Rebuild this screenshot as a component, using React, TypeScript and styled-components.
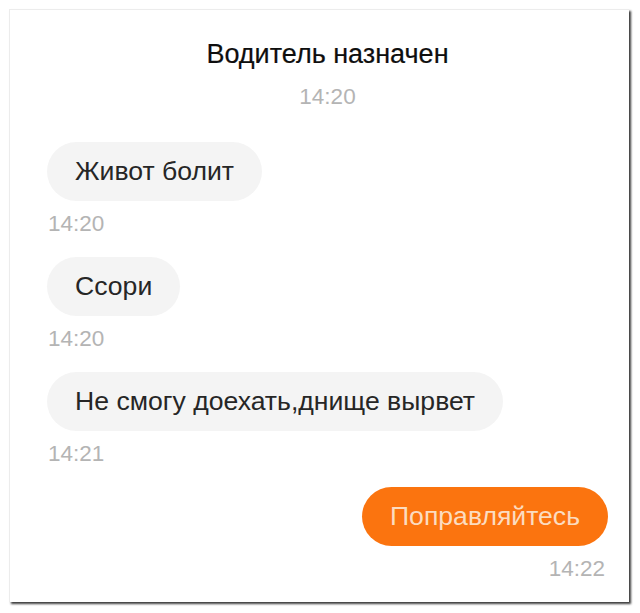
import styled, { createGlobalStyle } from "styled-components";

const GlobalStyle = createGlobalStyle`
  html, body {
    margin: 0;
    padding: 0;
    background: #ffffff;
  }
  body {
    font-family: "Liberation Sans", Arial, sans-serif;
  }
`;

const Page = styled.div`
  width: 640px;
  height: 613px;
  padding: 9px 11px 11px 9px;
  box-sizing: border-box;
`;

const Card = styled.div`
  width: 620px;
  height: 593px;
  box-sizing: border-box;
  border: 1px solid #ececec;
  border-right: none;
  border-bottom: none;
  background: #ffffff;
  box-shadow: 2px 2px 2px rgba(40, 40, 40, 0.9);
  padding: 29px 21px 0 37px;
  display: flex;
  flex-direction: column;
`;

const Header = styled.div`
  display: flex;
  flex-direction: column;
  align-items: center;
  margin-bottom: 33px;
`;

const Title = styled.div`
  font-size: 27px;
  line-height: 31px;
  color: #0e0e0e;
  -webkit-text-stroke: 0.2px #0e0e0e;
`;

const Time = styled.div<{ $align?: "left" | "center" | "right" }>`
  font-size: 22.5px;
  line-height: 24px;
  color: #b4b4b4;
  text-align: ${(p) => p.$align ?? "left"};
`;

const HeaderTime = styled(Time)`
  margin-top: 15px;
`;

const List = styled.div`
  display: flex;
  flex-direction: column;
`;

const Message = styled.div<{ $mine?: boolean }>`
  display: flex;
  flex-direction: column;
  align-items: ${(p) => (p.$mine ? "flex-end" : "flex-start")};
  height: 115px;
`;

const Bubble = styled.div<{ $mine?: boolean }>`
  height: 59px;
  line-height: 59px;
  padding: 0 28px;
  border-radius: 30px;
  font-size: 26.6px;
  white-space: nowrap;
  background: ${(p) => (p.$mine ? "#fb740f" : "#f4f4f4")};
  color: ${(p) => (p.$mine ? "#fbdcc0" : "#262626")};
`;

const Stamp = styled(Time)`
  margin-top: 11px;
  padding: 0 3px 0 1px;
`;

const messages = [
  { text: "Живот болит", time: "14:20" },
  { text: "Ссори", time: "14:20" },
  { text: "Не смогу доехать,днище вырвет", time: "14:21" },
  { text: "Поправляйтесь", time: "14:22", mine: true },
];

export default function App() {
  return (
    <>
      <GlobalStyle />
      <Page>
        <Card>
          <Header>
            <Title>Водитель назначен</Title>
            <HeaderTime $align="center">14:20</HeaderTime>
          </Header>
          <List>
            {messages.map((m, i) => (
              <Message key={i} $mine={m.mine}>
                <Bubble $mine={m.mine}>{m.text}</Bubble>
                <Stamp>{m.time}</Stamp>
              </Message>
            ))}
          </List>
        </Card>
      </Page>
    </>
  );
}
